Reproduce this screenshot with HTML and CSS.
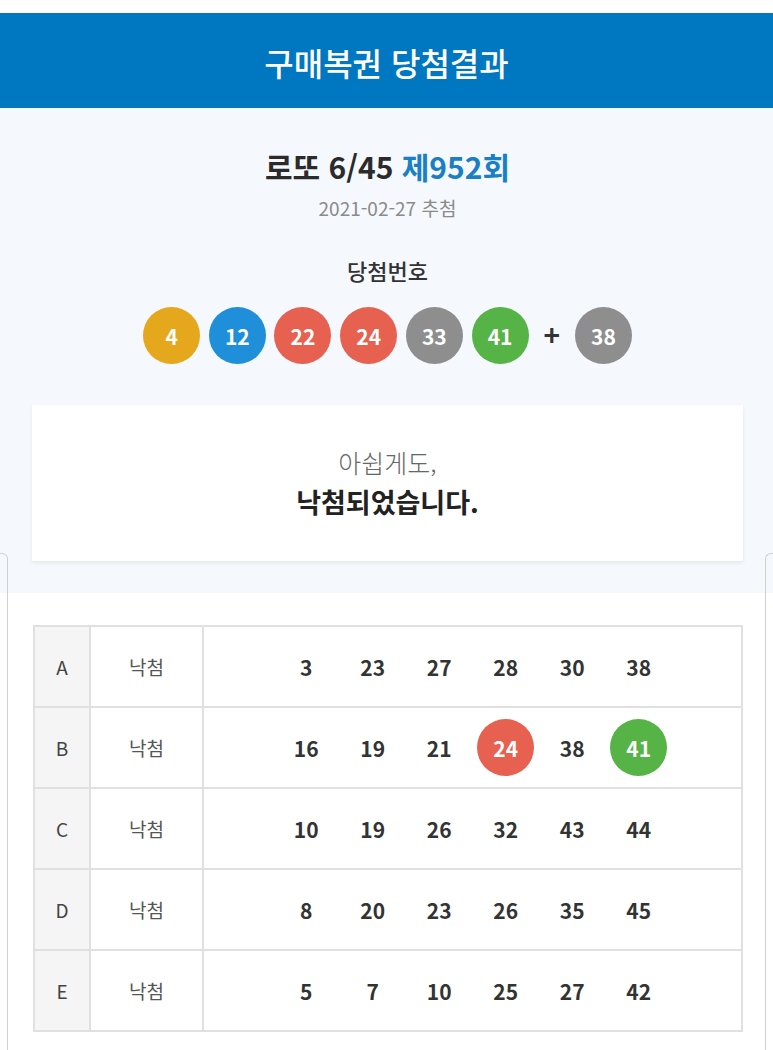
FILE: index.html
```html
<!DOCTYPE html>
<html lang="ko">
<head>
<meta charset="utf-8">
<title>구매복권 당첨결과</title>
<link rel="stylesheet" href="styles.css">
</head>
<body>
<header class="app-header">
  <h1 class="app-title">구매복권 당첨결과</h1>
</header>
<section class="summary">
  <h2 class="round-title">로또 6/45 <span class="round-no">제952회</span></h2>
  <p class="draw-date">2021-02-27 추첨</p>
  <h3 class="win-label">당첨번호</h3>
  <div class="win-balls">
    <span class="ball ball-yellow">4</span>
    <span class="ball ball-blue">12</span>
    <span class="ball ball-red">22</span>
    <span class="ball ball-red">24</span>
    <span class="ball ball-gray">33</span>
    <span class="ball ball-green">41</span>
    <span class="plus">+</span>
    <span class="ball ball-gray">38</span>
  </div>
  <div class="result-card">
    <p class="result-sub">아쉽게도,</p>
    <p class="result-main">낙첨되었습니다.</p>
  </div>
</section>
<div class="slides">
  <div class="peek peek-left"></div>
  <div class="slide">
    <table class="games">
      <colgroup>
        <col class="col-label">
        <col class="col-status">
        <col class="col-nums">
      </colgroup>
      <tbody>
        <tr>
          <td class="label">A</td>
          <td class="status">낙첨</td>
          <td class="nums"><div class="num-row"><span class="num">3</span><span class="num">23</span><span class="num">27</span><span class="num">28</span><span class="num">30</span><span class="num">38</span></div></td>
        </tr>
        <tr>
          <td class="label">B</td>
          <td class="status">낙첨</td>
          <td class="nums"><div class="num-row"><span class="num">16</span><span class="num">19</span><span class="num">21</span><span class="num hit ball-red">24</span><span class="num">38</span><span class="num hit ball-green">41</span></div></td>
        </tr>
        <tr>
          <td class="label">C</td>
          <td class="status">낙첨</td>
          <td class="nums"><div class="num-row"><span class="num">10</span><span class="num">19</span><span class="num">26</span><span class="num">32</span><span class="num">43</span><span class="num">44</span></div></td>
        </tr>
        <tr>
          <td class="label">D</td>
          <td class="status">낙첨</td>
          <td class="nums"><div class="num-row"><span class="num">8</span><span class="num">20</span><span class="num">23</span><span class="num">26</span><span class="num">35</span><span class="num">45</span></div></td>
        </tr>
        <tr>
          <td class="label">E</td>
          <td class="status">낙첨</td>
          <td class="nums"><div class="num-row"><span class="num">5</span><span class="num">7</span><span class="num">10</span><span class="num">25</span><span class="num">27</span><span class="num">42</span></div></td>
        </tr>
      </tbody>
    </table>
  </div>
  <div class="peek peek-right"></div>
</div>
</body>
</html>
```

FILE: styles.css
```css
* {
  box-sizing: border-box;
}

html, body {
  margin: 0;
  padding: 0;
  background: #ffffff;
}

body {
  padding-top: 13px;
  font-family: "Noto Sans CJK KR", "Noto Sans", sans-serif;
  color: #333333;
}

.app-header {
  background: #0077c1;
  height: 95px;
  display: flex;
  align-items: center;
  justify-content: center;
}

.app-title {
  margin: 0;
  padding-top: 3px;
  font-size: 32px;
  font-weight: 500;
  color: #ffffff;
  line-height: 40px;
}

.summary {
  background: #f5f9fd;
  padding: 38px 30px 32px 32px;
  display: flex;
  flex-direction: column;
  align-items: center;
}

.round-title {
  margin: 0;
  font-size: 30px;
  font-weight: 700;
  line-height: 40px;
  color: #2b2b2b;
}

.round-no {
  color: #1b7fc4;
}

.draw-date {
  margin: 9px 0 0;
  font-size: 19px;
  line-height: 26px;
  color: #8a8a8a;
}

.win-label {
  margin: 34px 0 0;
  font-size: 22px;
  font-weight: 500;
  line-height: 30px;
  color: #333333;
}

.win-balls {
  margin-top: 22px;
  display: flex;
  align-items: center;
  gap: 8.7px;
}

.ball {
  width: 57px;
  height: 57px;
  border-radius: 50%;
  display: flex;
  align-items: center;
  justify-content: center;
  color: #ffffff;
  font-size: 21px;
  font-weight: 700;
}

.ball-yellow { background: #e5a71b; }
.ball-blue { background: #1e8fd8; }
.ball-red { background: #e6614f; }
.ball-gray { background: #8e8e8e; }
.ball-green { background: #56b345; }

.plus {
  width: 29px;
  text-align: center;
  font-size: 28px;
  font-weight: 700;
  color: #333333;
  line-height: 30px;
  margin-top: -4px;
}

.result-card {
  align-self: stretch;
  margin-top: 41px;
  background: #ffffff;
  box-shadow: 0 2px 4px rgba(0, 0, 0, 0.07);
  padding: 37px 0 39px;
  text-align: center;
}

.result-sub {
  margin: 0;
  font-size: 25px;
  font-weight: 300;
  line-height: 40px;
  color: #666666;
}

.result-main {
  margin: 0;
  font-size: 27px;
  font-weight: 700;
  line-height: 40px;
  color: #222222;
}

.slides {
  display: flex;
  margin-top: -40px;
}

.peek {
  flex: 0 0 8px;
  border: 1px solid #cfcfcf;
  background: transparent;
}

.peek-left {
  border-left: none;
  border-radius: 0 6px 0 0;
}

.peek-right {
  border-right: none;
  border-radius: 6px 0 0 0;
}

.slide {
  flex: 1 1 auto;
  margin: 40px 2px 0;
  background: #ffffff;
  padding: 32px 20px 60px 23px;
}

.games {
  width: 100%;
  border-collapse: collapse;
  border: 2px solid #e0e0e0;
}

.col-label { width: 56px; }
.col-status { width: 113px; }

.games td {
  height: 81px;
  padding: 0;
  border: 2px solid #e0e0e0;
  text-align: center;
  vertical-align: middle;
}

.games .label {
  background: #f5f5f5;
  font-size: 19px;
  color: #444444;
}

.games .status {
  font-size: 19px;
  color: #555555;
}

.num-row {
  display: flex;
  justify-content: center;
  gap: 9.5px;
}

.num {
  width: 57px;
  height: 57px;
  border-radius: 50%;
  display: flex;
  align-items: center;
  justify-content: center;
  font-size: 21px;
  font-weight: 700;
  color: #333333;
}

.num.hit {
  color: #ffffff;
}
```
